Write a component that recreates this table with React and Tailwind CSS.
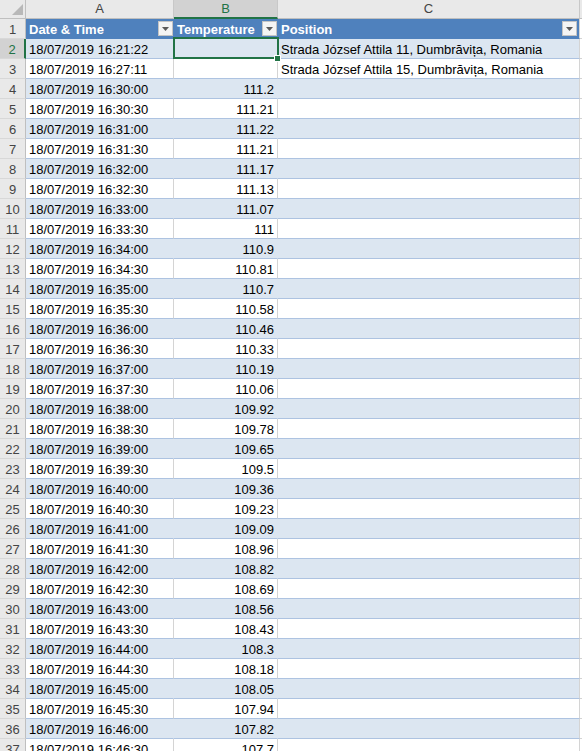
import React from "react";

const temps = [
  "111.2", "111.21", "111.22", "111.21", "111.17", "111.13", "111.07", "111",
  "110.9", "110.81", "110.7", "110.58", "110.46", "110.33", "110.19", "110.06",
  "109.92", "109.78", "109.65", "109.5", "109.36", "109.23", "109.09", "108.96",
  "108.82", "108.69", "108.56", "108.43", "108.3", "108.18", "108.05", "107.94",
  "107.82", "107.7",
];

const pad = (n) => String(n).padStart(2, "0");

// rows 2..37
const rows = [
  { date: "18/07/2019 16:21:22", temp: "", pos: "Strada József Attila 11, Dumbrăvița, Romania" },
  { date: "18/07/2019 16:27:11", temp: "", pos: "Strada József Attila 15, Dumbrăvița, Romania" },
  ...temps.map((t, i) => {
    const s = 16 * 3600 + 30 * 60 + i * 30;
    const time = `${pad(Math.floor(s / 3600))}:${pad(Math.floor((s % 3600) / 60))}:${pad(s % 60)}`;
    return { date: `18/07/2019 ${time}`, temp: t, pos: "" };
  }),
];

function Dropdown({ className }) {
  return (
    <div
      className={`absolute top-[2px] w-[15px] h-[15px] border border-[#c4c4c4] bg-[#f4f4f4] flex items-center justify-center ${className}`}
    >
      <svg width="7" height="4" viewBox="0 0 7 4">
        <polygon points="0,0 7,0 3.5,4" fill="#5a5a5a" />
      </svg>
    </div>
  );
}

function ColHeader({ label, w, selected }) {
  return (
    <div
      className={`h-[19px] shrink-0 border-r border-[#c8c8c8] text-center leading-[18px] ${w} ${
        selected
          ? "bg-[#d2d2d2] text-[#217346] border-b-2 border-b-[#217346]"
          : "bg-[#e9e9e9] text-[#444] border-b border-b-[#bfbfbf]"
      }`}
    >
      {label}
    </div>
  );
}

function RowNum({ n, selected }) {
  return (
    <div
      className={`w-[26px] h-[20px] shrink-0 text-center leading-[20px] pt-[1px] border-b border-b-[#d8d8d8] ${
        selected
          ? "bg-[#d2d2d2] text-[#217346] border-r-2 border-r-[#217346]"
          : "bg-[#e9e9e9] text-[#444] border-r border-r-[#bfbfbf]"
      }`}
    >
      {n}
    </div>
  );
}

function DataRow({ n, row, band }) {
  const bg = band ? "bg-[#dce6f1]" : "bg-white";
  const vline = band ? "border-r-[#dce6f1]" : "border-r-[#d4d4d4]";
  const cell = `h-[20px] shrink-0 border-b border-b-[#adc3e1] border-r leading-[20px] pt-[1px] overflow-hidden whitespace-nowrap ${bg}`;
  return (
    <div className="flex">
      <RowNum n={n} selected={n === 2} />
      <div className={`${cell} ${vline} w-[148px] pl-[3px]`}>{row.date}</div>
      <div className={`${cell} ${vline} w-[104px] pr-[3px] text-right`}>{row.temp}</div>
      <div className={`${cell} border-r-[#d4d4d4] w-[302px] pl-[3px]`}>{row.pos}</div>
      <div className="h-[20px] flex-1 border-b border-b-[#d4d4d4] bg-white" />
    </div>
  );
}

export default function App() {
  return (
    <div
      className="relative w-[582px] h-[751px] overflow-hidden bg-white text-[13px] text-black"
      style={{ fontFamily: '"Liberation Sans", Arial, sans-serif' }}
    >
      {/* column letters */}
      <div className="flex">
        <div className="relative w-[26px] h-[19px] shrink-0 bg-[#e9e9e9] border-r border-b border-[#bfbfbf]">
          <svg className="absolute left-0 top-0" width="25" height="18" viewBox="0 0 25 18">
            <polygon points="23,4 23,15 12,15" fill="#b8b8b8" />
          </svg>
        </div>
        <ColHeader label="A" w="w-[148px]" />
        <ColHeader label="B" w="w-[104px]" selected />
        <ColHeader label="C" w="w-[302px]" />
        <div className="h-[19px] flex-1 bg-[#e9e9e9] border-b border-[#bfbfbf]" />
      </div>

      {/* table header row */}
      <div className="flex">
        <RowNum n={1} />
        <div className="relative h-[20px] w-[148px] shrink-0 bg-[#4f81bd] border-b border-b-[#4f81bd] border-r border-r-[#4f81bd] pl-[3px] pt-[1px] leading-[20px] font-bold text-white">
          Date &amp; Time
          <Dropdown className="right-0" />
        </div>
        <div className="relative h-[20px] w-[104px] shrink-0 bg-[#4f81bd] border-b border-b-[#4f81bd] border-r border-r-[#4f81bd] pl-[3px] pt-[1px] leading-[20px] font-bold text-white">
          Temperature
          <Dropdown className="right-0" />
        </div>
        <div className="relative h-[20px] w-[302px] shrink-0 bg-[#4f81bd] border-b border-b-[#4f81bd] border-r border-r-[#d4d4d4] pl-[3px] pt-[1px] leading-[20px] font-bold text-white">
          Position
          <Dropdown className="right-[2px]" />
        </div>
        <div className="h-[20px] flex-1 border-b border-b-[#d4d4d4] bg-white" />
      </div>

      {rows.map((r, i) => (
        <DataRow key={i} n={i + 2} row={r} band={i % 2 === 0} />
      ))}

      {/* active cell B2 */}
      <div className="absolute left-[173px] top-[37px] w-[106px] h-[22px] border-2 border-[#217346]" />
      <div className="absolute left-[274px] top-[55px] w-[7px] h-[7px] bg-[#217346] border border-white" />
    </div>
  );
}
